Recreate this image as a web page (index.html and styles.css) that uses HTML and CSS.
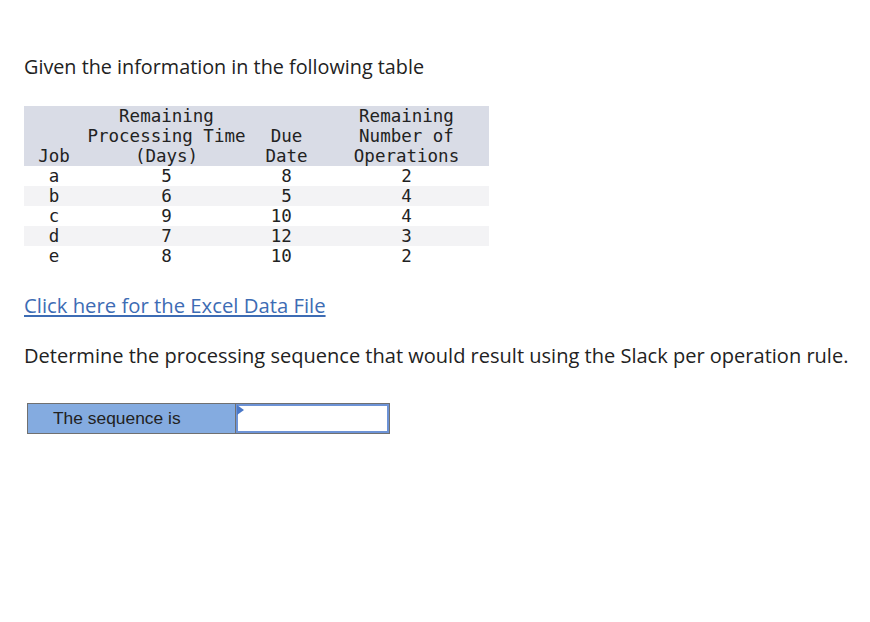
FILE: index.html
```html
<!DOCTYPE html>
<html>
<head>
<meta charset="utf-8">
<link rel="stylesheet" href="styles.css">
</head>
<body>
<div class="page">
  <p class="intro">Given the information in the following table</p>
  <table class="data">
    <colgroup>
      <col class="c-job"><col class="c-proc"><col class="c-due"><col class="c-ops">
    </colgroup>
    <thead>
      <tr>
        <th>Job</th>
        <th>Remaining<br>Processing Time<br>(Days)</th>
        <th>Due<br>Date</th>
        <th>Remaining<br>Number of<br>Operations</th>
      </tr>
    </thead>
    <tbody>
      <tr><td>a</td><td>5</td><td class="due"> 8 </td><td>2</td></tr>
      <tr class="alt"><td>b</td><td>6</td><td class="due"> 5 </td><td>4</td></tr>
      <tr><td>c</td><td>9</td><td class="due">10 </td><td>4</td></tr>
      <tr class="alt"><td>d</td><td>7</td><td class="due">12 </td><td>3</td></tr>
      <tr><td>e</td><td>8</td><td class="due">10 </td><td>2</td></tr>
    </tbody>
  </table>
  <p class="link-line"><a class="excel" href="#">Click here for the Excel Data File</a></p>
  <p class="question">Determine the processing sequence that would result using the Slack per operation rule.</p>
  <table class="answer">
    <tr>
      <td class="label">The sequence is</td>
      <td class="input"><span class="marker"></span></td>
    </tr>
  </table>
</div>
</body>
</html>
```
FILE: styles.css
```css
html, body {
  margin: 0;
  padding: 0;
  background: #ffffff;
}
.page {
  padding: 54px 0 0 24px;
  font-family: "Open Sans", "Liberation Sans", sans-serif;
  color: #222222;
}
.intro, .question, .link-line {
  margin: 0;
  font-size: 19.8px;
  line-height: 26px;
}
.link-line {
  font-size: 20.3px;
  margin-top: 26px;
}
.question {
  font-size: 20.05px;
  margin-top: 25px;
}
.data {
  margin-top: 26px;
  border-collapse: collapse;
  table-layout: fixed;
  width: 465px;
  font-family: "DejaVu Sans Mono", monospace;
  font-size: 17.5px;
  line-height: 20px;
  color: #222222;
}
.c-job { width: 60px; }
.c-proc { width: 165px; }
.c-due { width: 75px; }
.c-ops { width: 165px; }
.data th {
  background: #d9dce6;
  font-weight: normal;
  vertical-align: bottom;
  text-align: center;
  padding: 0;
  white-space: nowrap;
}
.data td {
  padding: 0;
  text-align: center;
  height: 20px;
}
.data td.due { white-space: pre; }
.data tr.alt td { background: #f3f3f5; }
.excel {
  color: #3d6cb4;
  text-decoration: underline;
}
.answer {
  margin: 34px 0 0 3px;
  border-collapse: collapse;
  font-family: "Liberation Sans", Arial, sans-serif;
  font-size: 17.4px;
}
.answer td {
  border: 1px solid #707070;
  height: 29px;
  padding: 0;
}
.answer .label {
  width: 182px;
  background: #84abe0;
  padding-left: 25px;
  color: #222222;
}
.answer .input {
  width: 153px;
  position: relative;
  background: #ffffff;
  box-shadow: inset 0 0 0 2px #6d93d6;
}
.marker {
  position: absolute;
  left: 1px;
  top: 1px;
  width: 0;
  height: 0;
  border-top: 5px solid transparent;
  border-bottom: 5px solid transparent;
  border-left: 7px solid #4a78c8;
}
```
